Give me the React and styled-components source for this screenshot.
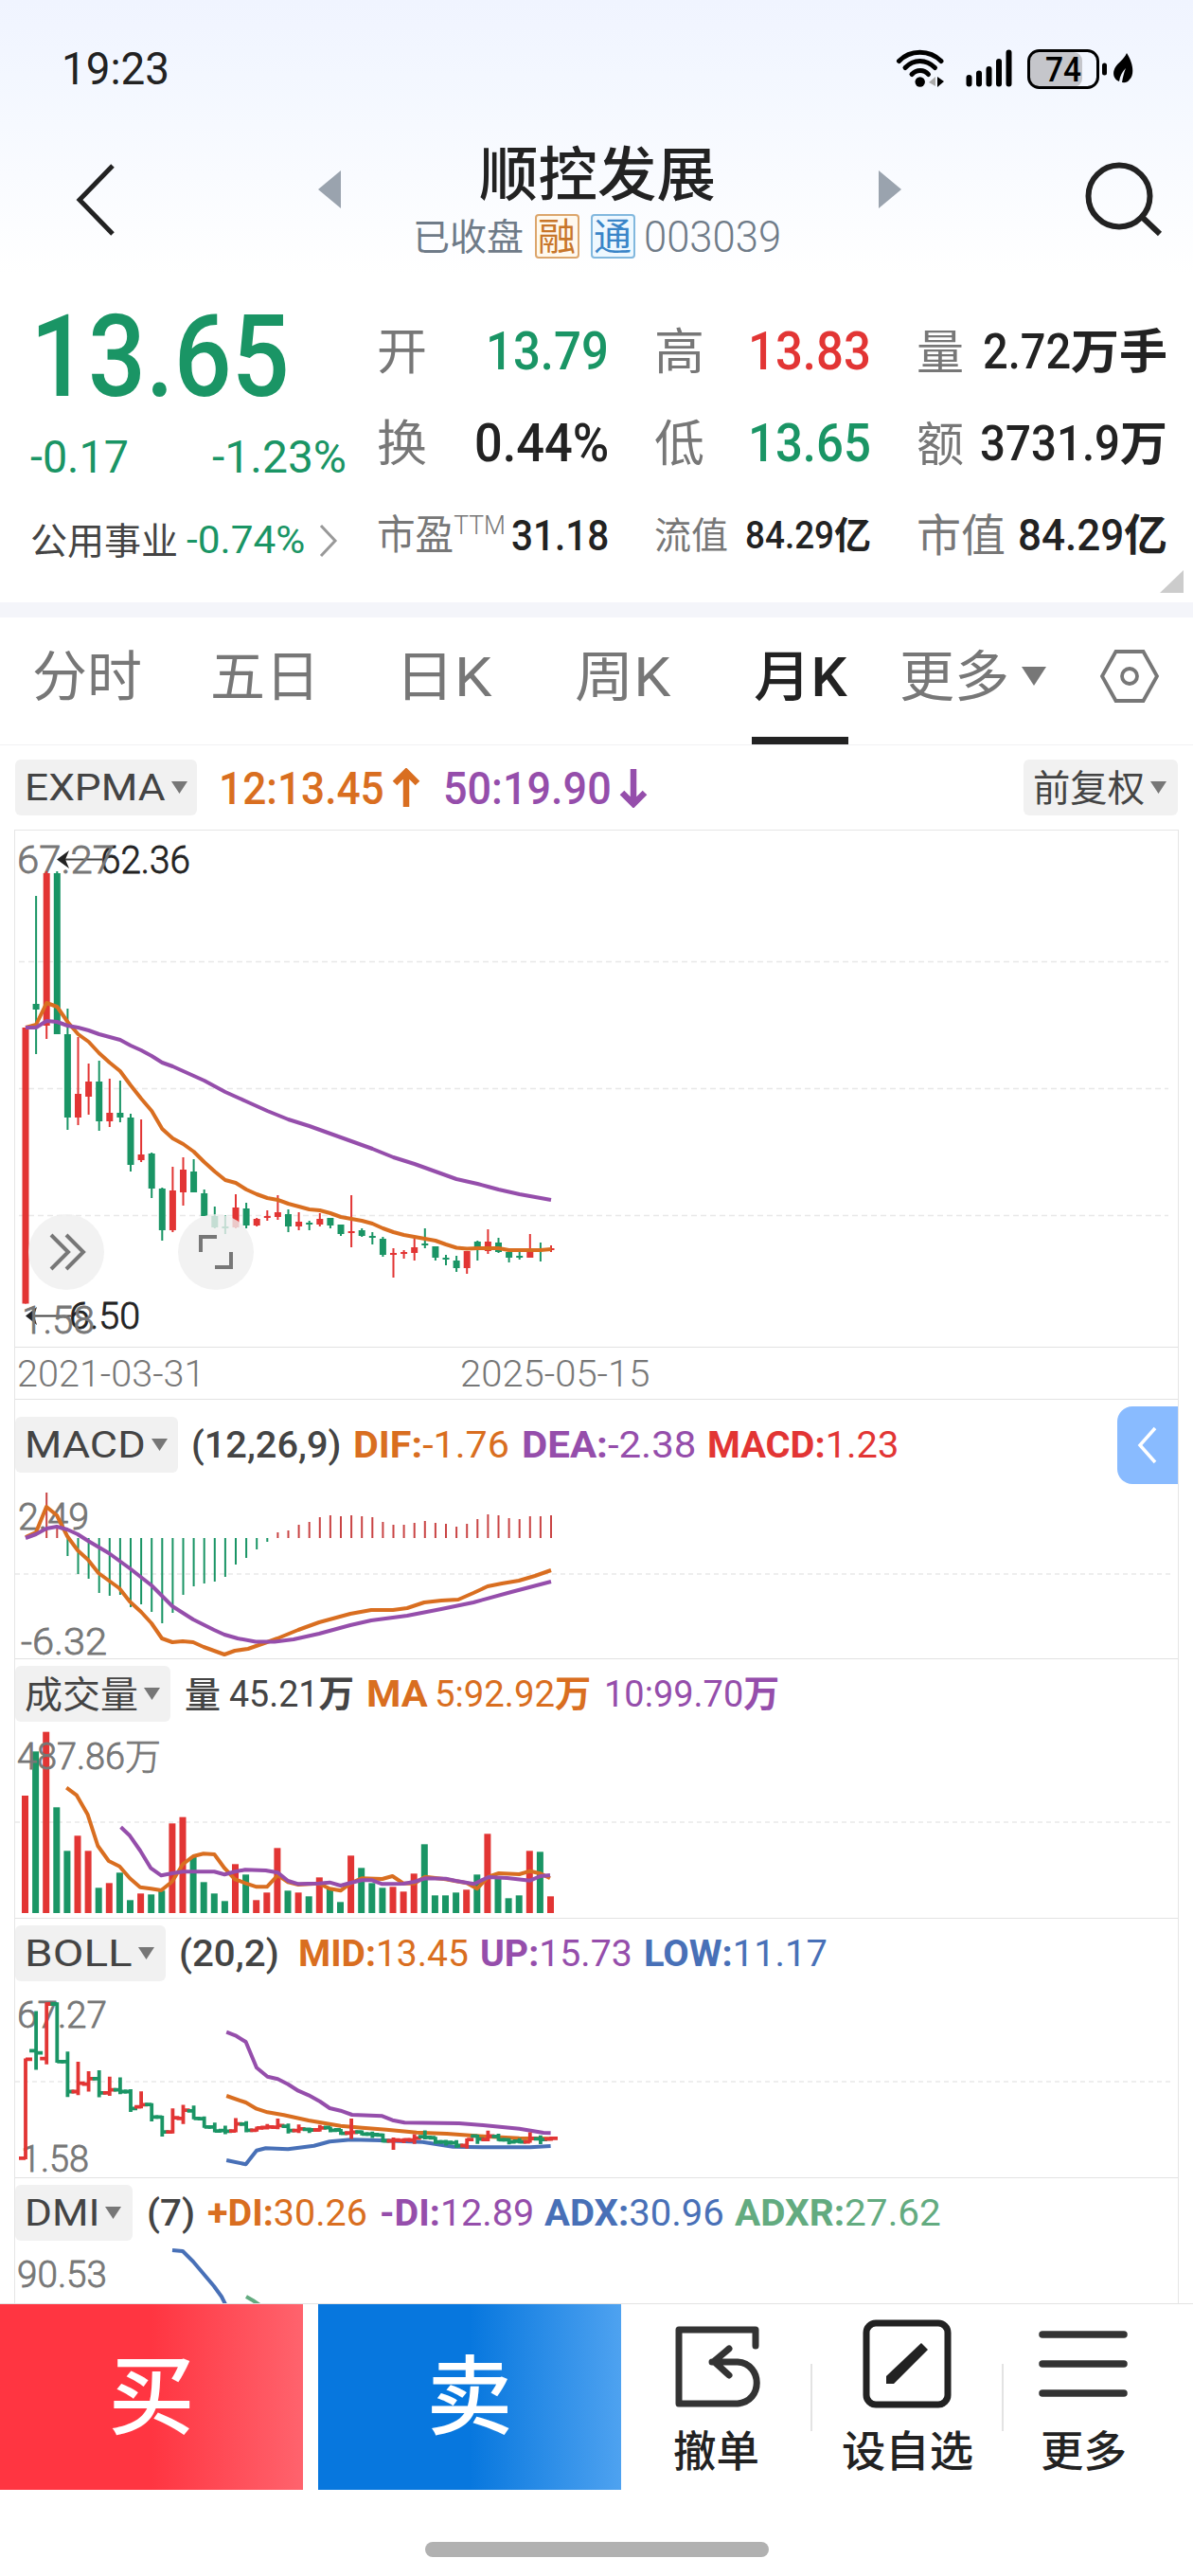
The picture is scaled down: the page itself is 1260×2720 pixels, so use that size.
import React, { useLayoutEffect, useRef, useState } from 'react'
import styled, { createGlobalStyle } from 'styled-components'

const GREEN = '#1a9565'
const RED = '#e23534'
const ORANGE = '#d96e20'
const PURPLE = '#954eab'
const BLUE = '#4870b7'
const MINT = '#63ab80'
const INK = '#222222'
const DARK = '#444444'
const GREY = '#777777'

const GlobalStyle = createGlobalStyle`
  body {
    margin: 0;
    background: #ffffff;
    font-family: Roboto, 'Noto Sans CJK SC', sans-serif;
    color: ${INK};
  }
`

const Screen = styled.main`
  width: 1260px;
  height: 2720px;
  overflow: hidden;
  display: flex;
  flex-direction: column;
  background: linear-gradient(#f0f4ff 0, #f3f7ff 80px, #ffffff 290px);
`

const FitBox = styled.span`
  display: block;
  flex: none;
  width: ${p => p.$w}px;
  margin-left: ${p => p.$ml || 0}px;
  padding-top: ${p => p.$top || 0}px;
  font-size: ${p => p.$size}px;
  line-height: 1.2;
  font-weight: ${p => p.$weight || 400};
  color: ${p => p.$color || INK};
  white-space: nowrap;
`

const FitInner = styled.span`
  display: inline-block;
  transform-origin: left center;
`

// squeezes a label so that it always fills its column
const Fit = ({ w, ml, top, size, weight, color, children }) => {
  const inner = useRef(null)
  const [scale, setScale] = useState(1)

  useLayoutEffect(() => {
    setScale(w / inner.current.offsetWidth)
  }, [w, size, weight, children])

  return (
    <FitBox $w={w} $ml={ml} $top={top} $size={size} $weight={weight} $color={color}>
      <FitInner ref={inner} style={{ transform: `scaleX(${scale})` }}>
        {children}
      </FitInner>
    </FitBox>
  )
}

const Bold = styled.span`
  font-weight: 700;
`

/* status bar */

const StatusBar = styled.div`
  box-sizing: border-box;
  flex: none;
  height: 146px;
  padding: 0 63px 0 65px;
  display: flex;
  align-items: center;
  justify-content: space-between;
`

const StatusIcons = styled.svg`
  display: block;
  width: 251px;
  height: 44px;
`

/* title bar */

const TitleBar = styled.header`
  box-sizing: border-box;
  flex: none;
  height: 144px;
  padding: 0 32px 0 78px;
  display: flex;
  align-items: flex-start;
  justify-content: space-between;
`

const TitleIcon = styled.svg`
  display: block;
  flex: none;
  margin-top: ${p => p.$top}px;
`

const TitleGroup = styled.div`
  width: 616px;
  margin: 0 auto 0 214px;
  display: flex;
`

const TitleText = styled.div`
  width: 389px;
  margin: 0 auto 0 76px;
  display: flex;
  flex-direction: column;
  align-items: center;
`

const SubTitle = styled.div`
  display: flex;
  align-items: center;
  height: 48px;
  margin-top: 2px;
`

const Badge = styled.span`
  box-sizing: border-box;
  width: 47px;
  height: 47px;
  margin-left: ${p => p.$ml}px;
  border: 2px solid ${p => p.$border};
  border-radius: 4px;
  background: ${p => p.$bg};
  color: ${p => p.$color};
  font-size: 40px;
  line-height: 46px;
  text-align: center;
  text-indent: -1px;
`

/* quote block */

const Quote = styled.section`
  box-sizing: border-box;
  position: relative;
  flex: none;
  height: 346px;
  padding-left: 32px;
  display: flex;
`

const PriceColumn = styled.div`
  width: 366px;
  display: flex;
  flex-direction: column;
`

const PriceRow = styled.div`
  display: flex;
  align-items: center;
  height: ${p => p.$h}px;
`

const StatColumn = styled.div`
  width: ${p => p.$w}px;
  margin-left: ${p => p.$ml || 0}px;
  padding-top: 32px;
`

const Stat = styled.div`
  display: flex;
  align-items: center;
  justify-content: space-between;
  height: 97px;
`

const StatValue = styled.div`
  display: flex;
  align-items: center;
`

const Ttm = styled.sup`
  font-size: 28px;
  font-weight: 300;
  line-height: 0;
  vertical-align: 16px;
`

const Corner = styled.svg`
  position: absolute;
  right: 10px;
  bottom: 10px;
`

const Band = styled.div`
  flex: none;
  height: 16px;
  background: #f4f5fa;
`

/* period tabs */

const Tabs = styled.nav`
  box-sizing: border-box;
  flex: none;
  height: 135px;
  border-bottom: 1px solid #f1f1f3;
  display: flex;
`

const Tab = styled.div`
  box-sizing: border-box;
  flex: none;
  height: 134px;
  width: ${p => p.$w}px;
  margin-left: ${p => p.$ml}px;
  padding-left: ${p => (p.$active ? 2 : 0)}px;
  padding-bottom: ${p => (p.$active ? 2 : 10)}px;
  border-bottom: ${p => (p.$active ? `8px solid ${INK}` : 'none')};
  display: flex;
  align-items: center;
`

const Caret = styled.svg`
  display: block;
  flex: none;
  margin-left: ${p => p.$ml}px;
`

/* indicator headers */

const Toolbar = styled.div`
  box-sizing: border-box;
  flex: none;
  height: 89px;
  padding: 15px 16px 0;
  display: flex;
  align-items: flex-start;
`

const Picker = styled.div`
  box-sizing: border-box;
  flex: none;
  width: ${p => p.$w}px;
  height: 59px;
  padding-left: 10px;
  border-radius: 6px;
  background: #f1f1f1;
  display: flex;
  align-items: center;
`

const ToolbarReadings = styled.div`
  flex: 1;
  height: 59px;
  display: flex;
  align-items: center;
`

const ArrowIcon = styled.svg`
  display: block;
  margin-left: 8px;
`

const Frame = styled.section`
  box-sizing: border-box;
  position: relative;
  flex: none;
  width: 1230px;
  height: 1556px;
  margin-left: 15px;
  overflow: hidden;
  border: 1px solid #e6e6e6;
  border-bottom: none;
`

const Pane = styled.div`
  box-sizing: border-box;
  height: ${p => p.$h}px;
  padding-top: ${p => p.$top || 0}px;
  border-bottom: 1px solid #e2e2e2;
`

const PaneHeader = styled.div`
  display: flex;
  align-items: center;
  height: 59px;
`

const Plot = styled.svg`
  display: block;
  width: 1228px;
  height: ${p => p.$h}px;
  overflow: visible;
  font-family: Roboto, 'Noto Sans CJK SC', sans-serif;
`

const Dates = styled.div`
  box-sizing: border-box;
  height: 55px;
  border-bottom: 1px solid #e2e2e2;
  display: flex;
  align-items: center;
`

const RoundButton = styled.button`
  position: absolute;
  top: 405px;
  left: ${p => p.$left}px;
  width: 80px;
  height: 80px;
  padding: 0;
  border: none;
  border-radius: 50%;
  background: rgba(239, 239, 239, 0.8);
`

const SideTab = styled.button`
  position: absolute;
  top: 608px;
  right: 0;
  width: 64px;
  height: 82px;
  padding: 0;
  border: none;
  border-radius: 16px 0 0 16px;
  background: #89bbff;
`

/* bottom bar */

const BottomBar = styled.footer`
  box-sizing: border-box;
  flex: none;
  height: 197px;
  border-top: 1px solid #e2e2e2;
  display: flex;
`

const TradeButton = styled.div`
  flex: none;
  width: 320px;
  height: 196px;
  margin-right: 16px;
  background: ${p => p.$bg};
  color: #ffffff;
  font-size: 91px;
  font-weight: 500;
  line-height: 198px;
  text-align: center;
`

const Action = styled.div`
  flex: none;
  width: ${p => p.$w}px;
  height: 196px;
  display: flex;
  flex-direction: column;
  align-items: center;
`

const ActionIcon = styled.svg`
  display: block;
  width: 96px;
  height: 96px;
  margin: 15px 0 19px;
`

const Divider = styled.div`
  flex: none;
  width: 2px;
  height: 71px;
  margin: 63px 0 0 ${p => p.$ml || 0}px;
  background: #e3e3e3;
`

const HomeArea = styled.div`
  flex: 1;
  display: flex;
  justify-content: center;
  background: #ffffff;
`

const HomeBar = styled.div`
  width: 363px;
  height: 16px;
  margin-top: 55px;
  border-radius: 8px;
  background: #b1b1b1;
`

// [up, high, body top, body bottom, low]
const CANDLES = [
  [1, 1085, 1085, 1376.5, 1376.5], [0, 946, 1060, 1066, 1113], [1, 920, 922, 1083, 1097],
  [0, 920, 922, 1092, 1092], [0, 1065, 1092, 1180, 1193], [1, 1095, 1155, 1180, 1188],
  [1, 1123, 1142, 1158, 1177], [0, 1120, 1142, 1184, 1194], [1, 1139, 1175, 1184, 1190],
  [0, 1141, 1175, 1180, 1185], [0, 1176, 1180, 1230, 1237], [1, 1182, 1219, 1225, 1227],
  [0, 1217, 1218, 1255, 1265], [0, 1254, 1255, 1299, 1310], [1, 1232, 1257, 1299, 1301],
  [1, 1222, 1235, 1259, 1273], [0, 1224, 1237, 1259, 1259], [0, 1256, 1260, 1284, 1284],
  [0, 1274, 1284, 1296, 1297], [0, 1283, 1295, 1297, 1303], [1, 1261, 1275, 1296, 1297],
  [0, 1270, 1276, 1294, 1297], [1, 1286, 1287, 1294, 1295], [1, 1278, 1284, 1286, 1289],
  [1, 1262, 1280, 1285, 1288], [0, 1277, 1282, 1295, 1301], [1, 1280, 1290, 1295, 1299],
  [0, 1289, 1291, 1293, 1299], [1, 1281, 1287, 1293, 1295], [0, 1286, 1286, 1294, 1297],
  [0, 1293, 1293, 1303, 1305], [1, 1262, 1300, 1302, 1317], [0, 1297, 1299, 1305, 1306],
  [0, 1301, 1305, 1307, 1314], [0, 1306, 1308, 1325, 1327], [1, 1318, 1323, 1325, 1349],
  [1, 1320, 1322, 1324, 1329], [1, 1308, 1317, 1323, 1331], [0, 1297, 1313, 1315, 1318],
  [0, 1316, 1316, 1328, 1331], [0, 1325, 1328, 1330, 1336], [0, 1326, 1331, 1339, 1343],
  [1, 1321, 1321, 1339, 1345], [0, 1310, 1311, 1320, 1331], [1, 1298, 1311, 1321, 1324],
  [0, 1307, 1312, 1322, 1323], [0, 1320, 1322, 1328, 1333], [0, 1320, 1326, 1328, 1330],
  [1, 1303, 1318, 1328, 1328], [0, 1312, 1319, 1321, 1332], [1, 1315, 1318, 1320, 1322],
]

const EMA12 = [
  1085, 1082, 1059, 1063, 1079, 1092, 1100, 1112, 1122, 1131, 1146, 1160, 1173, 1192, 1202, 1208, 1216,
  1227, 1237, 1246, 1249, 1256, 1261, 1265, 1267, 1271, 1274, 1277, 1278, 1281, 1285, 1287, 1289, 1292,
  1297, 1301, 1304, 1306, 1308, 1310, 1314, 1317.5, 1318.5, 1318, 1318, 1318, 1320, 1320, 1320, 1320, 1319,
]

const EMA50 = [
  1085, 1085, 1078, 1079, 1083, 1085, 1088, 1092, 1095, 1098, 1104, 1109, 1115, 1122, 1126, 1131, 1136,
  1141, 1147, 1153, 1158, 1163, 1168, 1173, 1177.5, 1182, 1185.5, 1189, 1193, 1197, 1201, 1205, 1209, 1213,
  1217.5, 1222, 1225.5, 1229, 1233, 1237, 1241, 1245, 1247.5, 1250, 1253, 1256, 1258.5, 1261, 1263, 1265, 1267,
]

// bar ends; anything above the zero line is drawn red
const MACD_ZERO = 1624
const MACD_BARS = [
  1624, 1624, 1576, 1611, 1643, 1662, 1667, 1682, 1685, 1684, 1697, 1694, 1702, 1714, 1703, 1684, 1675,
  1672, 1670, 1665, 1652, 1645, 1636, 1628, 1618, 1616, 1610, 1607, 1602, 1600, 1601, 1600, 1601, 1602,
  1607, 1610, 1610, 1608, 1606, 1608, 1609, 1612, 1609, 1604, 1599, 1600, 1603, 1604, 1601, 1601, 1600,
]

const DIF =
  '27,1623 38,1618 49,1591 60,1600 71,1622 82,1637 93,1647 104,1661 126,1677 137,1691 149,1702 160,1714 171,1730 182,1734 193,1733 204,1734 215,1739 226,1743 237,1747 248,1743 262,1741 282,1734 293,1730 315,1721 337,1713 348,1710 370,1704 392,1700 415,1700 430,1698 448,1692 466,1690 484,1689 500,1682 515,1675 530,1672 548,1669 565,1664 582,1658'
const DEA =
  '27,1624 38,1620 49,1614 60,1612 71,1615 82,1620 93,1627 115,1640 137,1656 160,1674 182,1696 204,1710 226,1721 237,1726 251,1730 270,1733.5 290,1733.5 310,1731 337,1725 370,1716 392,1711 430,1706 466,1699 500,1692 540,1681 582,1670'

// heights of the volume bars, in thirds of a pixel
const VOLUMES = [
  372, 512, 574, 335, 197, 245, 197, 80, 95, 128, 41, 62, 59, 71, 284, 304, 178, 98, 62, 38, 155, 122, 41,
  65, 206, 71, 65, 53, 113, 77, 35, 182, 143, 95, 80, 83, 68, 125, 218, 56, 56, 65, 74, 122, 251, 113, 47,
  56, 197, 194, 53,
]
const VOLUME_COLORS = 'rgrggrrgrggrggrrggggrgrrrgrgrggrgggrrrggggrgrgggrgr'

const MA5 =
  '110,413 127,437 145,497 162,597 180,645 198,662 215,700 232,728 250,733 267,738 285,710 303,655 320,630 337,622 355,624 372,668 389,703 406,715 425,727 442,727 460,690 477,712 494,720 528,716 546,733 564,739 581,715 599,700 633,702 650,693 668,716 686,716 704,695 721,699 738,703 755,709 773,715 790,733 809,695 826,684 860,687 878,677 895,685 911,700'
const MA10 =
  '200,538 215,565 232,612 250,668 267,691 285,684 303,679 355,679 372,688 389,679 406,673 440,675 460,682 477,708 494,718 528,716 546,713 564,723 581,714 599,706 616,706 633,718 668,717 686,711 704,700 738,701 755,708 785,718 809,696 840,699 878,707 895,693 911,690'

const BOLL_UP =
  '375,347 390,358 407,378 425,460 443,488 460,496 477,512 494,533 511,547 530,567 546,588 564,596 583,609 633,613 650,626 670,634 760,636 800,642 860,653 900,666 912,667'
const BOLL_MID =
  '375,549 407,570 425,590 443,601 470,610 511,627 564,644 600,650 640,656 690,665 740,669 800,677 860,683 912,685'
const BOLL_LOW =
  '375,753 407,766 425,722 440,715 477,718 520,707 546,694 581,688 630,690 700,695 750,710 800,712 878,712 912,708'

const STEP = 11.1
const xAt = i => 27 + i * STEP
const series = values => values.map((v, i) => `${xAt(i)},${v}`).join(' ')
const place = (points, top) =>
  points
    .split(' ')
    .map(point => {
      const [x, y] = point.split(',')
      return `${(x / 1.568).toFixed(1)},${(top + y / 3).toFixed(1)}`
    })
    .join(' ')

const Line = ({ points, color }) => (
  <polyline points={points} fill="none" stroke={color} strokeWidth="4" strokeLinejoin="round" />
)

const AxisText = ({ x, y, w, size = 38, color = GREY, children }) => (
  <text
    x={x}
    y={y}
    fontSize={size}
    fontWeight="300"
    fill={color}
    stroke={color}
    strokeWidth="0.8"
    textLength={w}
    lengthAdjust="spacingAndGlyphs"
  >
    {children}
  </text>
)

const Dotted = ({ y }) => (
  <line x1="16" x2="1240" y1={y} y2={y} stroke="#eeeeee" strokeWidth="2" strokeDasharray="5 4" />
)

const SmallCaret = () => (
  <Caret $ml={6} width="17" height="13" viewBox="0 0 17 13">
    <path d="M0 0H17L8.5 13Z" fill={GREY} />
  </Caret>
)

const PriceChart = () => (
  <Plot $h={545} viewBox="16 877 1228 545">
    {[1015.5, 1149.5, 1283.5].map(y => (
      <line key={y} x1="20" x2="1234" y1={y} y2={y} stroke="#e8e8e8" strokeWidth="1.5" strokeDasharray="6 4" />
    ))}
    <path d="M64 907.5H108" stroke={DARK} strokeWidth="2" />
    <path d="M60 907.5L73 898L69 907.5L73 917Z" fill={INK} />
    <AxisText x={106} y={922} w={95} size={40} color={INK}>62.36</AxisText>
    <path d="M32 1389.5H75" stroke={DARK} strokeWidth="2" />
    <path d="M27 1389.5L39 1380L36 1389.5L39 1399Z" fill={INK} />
    <AxisText x={73} y={1403} w={75} size={39} color={INK}>6.50</AxisText>
    <AxisText x={18} y={922} w={103} size={41}>67.27</AxisText>
    <AxisText x={23} y={1408} w={77} size={41}>1.58</AxisText>
    {CANDLES.map(([up, high, top, bottom, low], i) => (
      <g key={i} fill={up ? RED : GREEN}>
        <rect x={xAt(i) - 1} y={high} width="2" height={low - high} />
        <rect x={xAt(i) - 3.5} y={top} width="7" height={bottom - top} />
      </g>
    ))}
    <Line points={series(EMA12)} color={ORANGE} />
    <Line points={series(EMA50)} color={PURPLE} />
  </Plot>
)

const MacdChart = () => (
  <Plot $h={196} viewBox="16 1555 1228 196">
    <Dotted y={1662} />
    {MACD_BARS.map((v, i) => (
      <rect
        key={i}
        x={xAt(i) - 1}
        y={Math.min(v, MACD_ZERO)}
        width="2"
        height={Math.abs(v - MACD_ZERO)}
        fill={v < MACD_ZERO ? '#c94444' : GREEN}
      />
    ))}
    <AxisText x={19} y={1615} w={75}>2.49</AxisText>
    <AxisText x={22} y={1747} w={91}>-6.32</AxisText>
    <Line points={DIF} color={ORANGE} />
    <Line points={DEA} color={PURPLE} />
  </Plot>
)

const VolumeChart = () => (
  <Plot $h={207} viewBox="16 1818 1228 207">
    <Dotted y={1924} />
    {VOLUMES.map((v, i) => (
      <rect
        key={i}
        x={xAt(i) - 4}
        y={2020 - v / 3}
        width="7"
        height={v / 3}
        fill={VOLUME_COLORS[i] === 'r' ? RED : GREEN}
      />
    ))}
    <AxisText x={18} y={1868} w={152}>487.86万</AxisText>
    <Line points={place(MA5, 1750)} color={ORANGE} />
    <Line points={place(MA10, 1750)} color={PURPLE} />
  </Plot>
)

const bollY = y => 2116 + (y - 922) * 0.3585

const BollChart = () => (
  <Plot $h={207} viewBox="16 2092 1228 207">
    <Dotted y={2198} />
    <AxisText x={18} y={2141} w={95}>67.27</AxisText>
    <AxisText x={22} y={2293} w={72}>1.58</AxisText>
    <Line points={place(BOLL_UP, 2030)} color={PURPLE} />
    <Line points={place(BOLL_MID, 2030)} color={ORANGE} />
    <Line points={place(BOLL_LOW, 2030)} color={BLUE} />
    {CANDLES.map(([up, high, top, bottom, low], i) => {
      const x = xAt(i)
      const open = bollY(up ? bottom : top)
      const close = bollY(up ? top : bottom)
      return (
        <path
          key={i}
          d={`M${x} ${bollY(high) - 1}V${bollY(low) + 1}M${x - 7} ${open}H${x}M${x} ${close}H${x + 7}`}
          fill="none"
          stroke={up ? RED : GREEN}
          strokeWidth="3.8"
        />
      )
    })}
  </Plot>
)

const DmiChart = () => (
  <Plot $h={67} viewBox="16 2365 1228 67">
    <AxisText x={18} y={2414} w={95}>90.53</AxisText>
    <Line points="182,2375 193,2376 204,2387 215,2400 226,2413 234,2424 240,2436" color={BLUE} />
    <Line points="260,2424 267,2428 276,2434" color={MINT} />
  </Plot>
)

const Reading = ({ name, value, ...rest }) => (
  <Fit size={39} top={2} {...rest}>
    <Bold>{name}</Bold>
    {value}
  </Fit>
)

const QuoteBlock = () => (
  <Quote>
    <PriceColumn>
      <PriceRow $h={166}>
        <Fit w={274} top={9} size={121} weight={500} color={GREEN}>13.65</Fit>
      </PriceRow>
      <PriceRow $h={51}>
        <Fit w={104} top={2} size={48} color={GREEN}>-0.17</Fit>
        <Fit w={142} ml={88} top={2} size={48} color={GREEN}>-1.23%</Fit>
      </PriceRow>
      <PriceRow $h={127}>
        <Fit w={156} top={3} size={39} color={DARK}>公用事业</Fit>
        <Fit w={125} ml={9} size={40} color={GREEN}>-0.74%</Fit>
        <Caret $ml={14} width="22" height="36" viewBox="0 0 22 36">
          <path d="M3 2L18 18L3 34" fill="none" stroke="#999999" strokeWidth="3" />
        </Caret>
      </PriceRow>
    </PriceColumn>
    <StatColumn $w={245}>
      <Stat>
        <Fit w={53} top={5} size={52} color={GREY}>开</Fit>
        <Fit w={130} top={2} size={56} weight={500} color={GREEN}>13.79</Fit>
      </Stat>
      <Stat>
        <Fit w={53} top={5} size={52} color={GREY}>换</Fit>
        <Fit w={142} top={2} size={56} weight={500}>0.44%</Fit>
      </Stat>
      <Stat>
        <Fit w={136} top={3} size={43} color={GREY}>市盈<Ttm>TTM</Ttm></Fit>
        <Fit w={103} top={3} size={44} weight={500}>31.18</Fit>
      </Stat>
    </StatColumn>
    <StatColumn $w={229} $ml={48}>
      <Stat>
        <Fit w={53} top={5} size={52} color={GREY}>高</Fit>
        <Fit w={130} top={2} size={56} weight={500} color={RED}>13.83</Fit>
      </Stat>
      <Stat>
        <Fit w={53} top={5} size={52} color={GREY}>低</Fit>
        <Fit w={130} top={2} size={56} weight={500} color={GREEN}>13.65</Fit>
      </Stat>
      <Stat>
        <Fit w={78} top={4} size={39} color={GREY}>流值</Fit>
        <StatValue>
          <Fit w={94} top={3} size={40} weight={500}>84.29</Fit>
          <Fit w={39} top={3} size={39} weight={700}>亿</Fit>
        </StatValue>
      </Stat>
    </StatColumn>
    <StatColumn $w={265} $ml={48}>
      <Stat>
        <Fit w={50} top={4} size={50} color={GREY}>量</Fit>
        <StatValue>
          <Fit w={93} top={2} size={51} weight={500}>2.72</Fit>
          <Fit w={102} top={2} size={50} weight={700}>万手</Fit>
        </StatValue>
      </Stat>
      <Stat>
        <Fit w={50} top={4} size={50} color={GREY}>额</Fit>
        <StatValue>
          <Fit w={148} top={2} size={51} weight={500}>3731.9</Fit>
          <Fit w={50} top={2} size={50} weight={700}>万</Fit>
        </StatValue>
      </Stat>
      <Stat>
        <Fit w={94} top={4} size={47} color={GREY}>市值</Fit>
        <StatValue>
          <Fit w={112} top={3} size={46} weight={500}>84.29</Fit>
          <Fit w={46} top={3} size={46} weight={700}>亿</Fit>
        </StatValue>
      </Stat>
    </StatColumn>
    <Corner width="25" height="24" viewBox="0 0 25 24">
      <path d="M25 0V24H0Z" fill="#cccccc" />
    </Corner>
  </Quote>
)

const App = () => (
  <Screen>
    <GlobalStyle />
    <StatusBar>
      <Fit w={114} size={49}>19:23</Fit>
      <StatusIcons viewBox="946 51 251 44">
        <g fill="none" stroke="#000000" strokeWidth="5" strokeLinecap="round">
          <path d="M949.5 64.5C961 52 982 52 994 64.5" />
          <path d="M956 71.5C965 62 978 62 987.5 71.5" />
          <path d="M963 78.5C968 73 976 73 980.5 78.5" />
          <path d="M1023.5 82V88.5M1034 77.5V88.5M1044.5 73V88.5M1055 65V88.5M1065.5 55.5V88.5" strokeWidth="6" />
        </g>
        <circle cx="971.7" cy="86.5" r="5.2" />
        <path d="M981 87L988 81V91Z" fill="#aaaaaa" />
        <path d="M990 81L997 86L990 92Z" />
        <rect x="1088" y="55" width="55" height="37" rx="9" fill="#c5c6cb" />
        <rect x="1086.5" y="53.5" width="73" height="39" rx="11" fill="none" stroke="#000000" strokeWidth="3" />
        <text x="1104" y="85.5" fontSize="36" fontWeight="500" textLength="38" lengthAdjust="spacingAndGlyphs">74</text>
        <rect x="1164" y="66.5" width="5" height="13" rx="2.5" />
        <path d="M1190 56C1196 65 1199 78 1193 84C1191 87 1188 87.5 1185 87C1186 81 1187 77 1189 72C1185 76 1183 80 1182 86C1175 83 1175 76 1178 71C1181 66 1187 63 1190 56Z" />
      </StatusIcons>
    </StatusBar>

    <TitleBar>
      <TitleIcon $top={26} width="44" height="78" viewBox="0 0 44 78">
        <path d="M41 3L6 39L41 75" fill="none" stroke={INK} strokeWidth="5" />
      </TitleIcon>
      <TitleGroup>
        <TitleIcon $top={34} width="24" height="40" viewBox="0 0 24 40">
          <path d="M24 0V40L0 20Z" fill="#9aa3ae" />
        </TitleIcon>
        <TitleText>
          <Fit w={250} top={3} size={62} weight={500}>顺控发展</Fit>
          <SubTitle>
            <Fit w={117} top={4} size={39} color="#6f7b88">已收盘</Fit>
            <Badge $ml={12} $border="#dca66c" $bg="#fff9ee" $color="#c8762a">融</Badge>
            <Badge $ml={12} $border="#82b8de" $bg="#eef8ff" $color="#3a85c8">通</Badge>
            <Fit w={145} ml={9} top={2} size={46} weight={300} color="#6f7b88">003039</Fit>
          </SubTitle>
        </TitleText>
        <TitleIcon $top={34} width="24" height="40" viewBox="0 0 24 40">
          <path d="M0 0L24 20L0 40Z" fill="#9aa3ae" />
        </TitleIcon>
      </TitleGroup>
      <TitleIcon $top={24} width="82" height="80" viewBox="0 0 82 80">
        <circle cx="36" cy="37" r="32.5" fill="none" stroke={INK} strokeWidth="6" />
        <path d="M60 59L79 77" stroke={INK} strokeWidth="6" />
      </TitleIcon>
    </TitleBar>

    <QuoteBlock />
    <Band />

    <Tabs>
      <Tab $w={115} $ml={34}><Fit w={116} top={4} size={58} color={GREY}>分时</Fit></Tab>
      <Tab $w={115} $ml={73}><Fit w={116} top={4} size={58} color={GREY}>五日</Fit></Tab>
      <Tab $w={100} $ml={80}><Fit w={102} top={4} size={58} color={GREY}>日K</Fit></Tab>
      <Tab $w={100} $ml={90}><Fit w={101} top={4} size={58} color={GREY}>周K</Fit></Tab>
      <Tab $w={102} $ml={87} $active><Fit w={99} top={4} size={58} weight={500}>月K</Fit></Tab>
      <Tab $w={155} $ml={54}>
        <Fit w={116} top={4} size={58} color={GREY}>更多</Fit>
        <Caret $ml={13} width="26" height="20" viewBox="0 0 26 20">
          <path d="M0 0H26L13 20Z" fill={GREY} />
        </Caret>
      </Tab>
      <Tab $w={64} $ml={56}>
        <svg width="64" height="58" viewBox="0 0 64 58">
          <path d="M17.5 3H46.5L61 29L46.5 55H17.5L3 29Z" fill="none" stroke={GREY} strokeWidth="3.8" />
          <circle cx="32" cy="29" r="8" fill="none" stroke={GREY} strokeWidth="3.8" />
        </svg>
      </Tab>
    </Tabs>

    <Toolbar>
      <Picker $w={192}>
        <Fit w={149} top={2} size={38} color={DARK}>EXPMA</Fit>
        <SmallCaret />
      </Picker>
      <ToolbarReadings>
        <Fit w={175} ml={23} top={2} size={48} color={ORANGE} weight={500}>12:13.45</Fit>
        <ArrowIcon width="30" height="42" viewBox="0 0 30 42">
          <path d="M15 41V5M3 16L15 4L27 16" fill="none" stroke={ORANGE} strokeWidth="6.5" />
        </ArrowIcon>
        <Fit w={178} ml={24} top={2} size={48} color={PURPLE} weight={500}>50:19.90</Fit>
        <ArrowIcon width="30" height="42" viewBox="0 0 30 42">
          <path d="M15 1V37M3 26L15 38L27 26" fill="none" stroke={PURPLE} strokeWidth="6.5" />
        </ArrowIcon>
      </ToolbarReadings>
      <Picker $w={163}>
        <Fit w={118} top={3} size={39} color={DARK}>前复权</Fit>
        <SmallCaret />
      </Picker>
    </Toolbar>

    <Frame>
      <Pane $h={546}>
        <PriceChart />
      </Pane>
      <Dates>
        <Fit w={198} ml={2} top={3} size={39} weight={300} color={GREY}>2021-03-31</Fit>
        <Fit w={200} ml={270} top={3} size={39} weight={300} color={GREY}>2025-05-15</Fit>
      </Dates>
      <Pane $h={274} $top={18}>
        <PaneHeader>
          <Picker $w={172}>
            <Fit w={128} top={2} size={38} color={DARK}>MACD</Fit>
            <SmallCaret />
          </Picker>
          <Fit w={158} ml={14} top={2} size={38} weight={500} color={DARK}>(12,26,9)</Fit>
          <Reading w={165} ml={13} color={ORANGE} name="DIF:" value="-1.76" />
          <Reading w={184} ml={13} color={PURPLE} name="DEA:" value="-2.38" />
          <Reading w={202} ml={12} color={RED} name="MACD:" value="1.23" />
        </PaneHeader>
        <MacdChart />
      </Pane>
      <Pane $h={274} $top={7}>
        <PaneHeader>
          <Picker $w={164}>
            <Fit w={120} top={4} size={39} color={DARK}>成交量</Fit>
            <SmallCaret />
          </Picker>
          <Fit w={38} ml={15} top={4} size={38} weight={500} color={DARK}>量</Fit>
          <Reading w={132} ml={9} color={DARK} value={<>45.21<Bold>万</Bold></>} />
          <Reading w={65} ml={13} color={ORANGE} name="MA" />
          <Reading w={165} ml={7} color={ORANGE} value={<>5:92.92<Bold>万</Bold></>} />
          <Reading w={185} ml={14} color={PURPLE} value={<>10:99.70<Bold>万</Bold></>} />
        </PaneHeader>
        <VolumeChart />
      </Pane>
      <Pane $h={274} $top={7}>
        <PaneHeader>
          <Picker $w={159}>
            <Fit w={114} top={2} size={38} color={DARK}>BOLL</Fit>
            <SmallCaret />
          </Picker>
          <Fit w={106} ml={14} top={2} size={38} weight={500} color={DARK}>(20,2)</Fit>
          <Reading w={180} ml={20} color={ORANGE} name="MID:" value="13.45" />
          <Reading w={161} ml={12} color={PURPLE} name="UP:" value="15.73" />
          <Reading w={194} ml={12} color={BLUE} name="LOW:" value="11.17" />
        </PaneHeader>
        <BollChart />
      </Pane>
      <Pane $h={134} $top={7}>
        <PaneHeader>
          <Picker $w={124}>
            <Fit w={79} top={2} size={38} color={DARK}>DMI</Fit>
            <SmallCaret />
          </Picker>
          <Fit w={51} ml={15} top={2} size={38} weight={500} color={DARK}>(7)</Fit>
          <Reading w={169} ml={13} color={ORANGE} name="+DI:" value="30.26" />
          <Reading w={163} ml={13} color={PURPLE} name="-DI:" value="12.89" />
          <Reading w={190} ml={11} color={BLUE} name="ADX:" value="30.96" />
          <Reading w={218} ml={11} color={MINT} name="ADXR:" value="27.62" />
        </PaneHeader>
        <DmiChart />
      </Pane>

      <RoundButton $left={14}>
        <svg width="80" height="80" viewBox="0 0 80 80">
          <path d="M24 22L42 40L24 58M40 22L58 40L40 58" fill="none" stroke={GREY} strokeWidth="4" />
        </svg>
      </RoundButton>
      <RoundButton $left={172}>
        <svg width="80" height="80" viewBox="0 0 80 80">
          <path d="M24 40V24H41M56 40V56H39" fill="none" stroke={GREY} strokeWidth="4" />
        </svg>
      </RoundButton>
      <SideTab>
        <svg width="64" height="82" viewBox="0 0 64 82">
          <path d="M40 23L24 41L40 59" fill="none" stroke="#ffffff" strokeWidth="3.5" />
        </svg>
      </SideTab>
    </Frame>

    <BottomBar>
      <TradeButton $bg="linear-gradient(90deg, #ff3541 50%, #ff636d)">买</TradeButton>
      <TradeButton $bg="linear-gradient(90deg, #0777de 50%, #4ea2f0)">卖</TradeButton>
      <Action $w={169}>
        <ActionIcon viewBox="0 0 96 96">
          <path
            d="M89 29V12H8V90H70C97 88 97 48 70 46H43M61 32L45 45.5L61 60"
            fill="none"
            stroke="#333333"
            strokeWidth="7"
            strokeLinecap="round"
            strokeLinejoin="round"
          />
        </ActionIcon>
        <Fit w={91} size={45} weight={500}>撤单</Fit>
      </Action>
      <Divider $ml={15} />
      <Action $w={200}>
        <ActionIcon viewBox="0 0 96 96">
          <rect x="5" y="5" width="86" height="86" rx="10" fill="none" stroke={INK} strokeWidth="7" />
          <path d="M63 26L70 33L34 69H26V61Z" fill={INK} />
        </ActionIcon>
        <Fit w={139} size={45} weight={500}>设自选</Fit>
      </Action>
      <Divider />
      <Action $w={168}>
        <ActionIcon viewBox="0 0 96 96">
          <path d="M5 17H91M5 48H91M5 79H91" stroke="#333333" strokeWidth="7.5" strokeLinecap="round" />
        </ActionIcon>
        <Fit w={91} size={45} weight={500}>更多</Fit>
      </Action>
    </BottomBar>
    <HomeArea>
      <HomeBar />
    </HomeArea>
  </Screen>
)

export default App
